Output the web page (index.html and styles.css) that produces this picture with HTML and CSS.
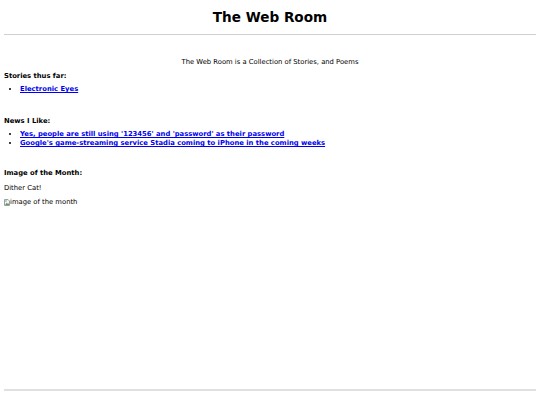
FILE: index.html
```html
<!DOCTYPE html>
<html lang="en">
<head>
<meta charset="utf-8">
<title>The Web Room</title>
<link rel="stylesheet" href="styles.css">
</head>
<body>
<header class="site-header">
  <h1 class="site-title">The Web Room</h1>
  <hr class="rule">
</header>
<main class="content">
  <p class="intro">The Web Room is a Collection of Stories, and Poems</p>

  <section class="block">
    <h2 class="block-title">Stories thus far:</h2>
    <ul class="links">
      <li><a href="#">Electronic Eyes</a></li>
    </ul>
  </section>

  <section class="block block-news">
    <h2 class="block-title">News I Like:</h2>
    <ul class="links">
      <li><a href="#">Yes, people are still using '123456' and 'password' as their password</a></li>
      <li><a href="#">Google's game-streaming service Stadia coming to iPhone in the coming weeks</a></li>
    </ul>
  </section>

  <section class="block block-image">
    <h2 class="block-title">Image of the Month:</h2>
    <p class="caption">Dither Cat!</p>
    <p class="broken-img"><svg class="broken-icon" width="6" height="7" viewBox="0 0 6 7"><path d="M0.5 0.5h3.5l1.5 1.5v4.5h-5z" fill="#f4f4f4" stroke="#a0a0a0" stroke-width="1"/><path d="M1 6l1.7-2.2 1.3 1.2 1-0.8v1.8z" fill="#5aa04a"/><rect x="1" y="1.3" width="1.8" height="1.4" fill="#7fb8e0"/></svg><span>image of the month</span></p>
  </section>
</main>
<footer class="site-footer">
  <hr class="rule rule-bottom">
</footer>
</body>
</html>
```

FILE: styles.css
```css
html, body {
  margin: 0;
  padding: 0;
  background: #ffffff;
}

body {
  font-family: "DejaVu Sans", Verdana, sans-serif;
  font-size: 6.8px;
  line-height: 10px;
  color: #000000;
  padding: 0 4px;
  min-height: 405px;
  box-sizing: border-box;
  display: flex;
  flex-direction: column;
}

.site-title {
  margin: 0;
  padding-top: 8px;
  font-size: 13.6px;
  line-height: 19px;
  font-weight: bold;
  text-align: center;
}

.rule {
  border: 0;
  border-top: 1px solid #cfcfcf;
  height: 0;
  margin: 7px 0 0 0;
}

.content {
  flex: 1;
}

.intro {
  margin: 22px 0 0 0;
  text-align: center;
}

.block {
  margin-top: 4px;
}

.block-news {
  margin-top: 22px;
}

.block-image {
  margin-top: 20px;
}

.block-title {
  margin: 0;
  font-size: 6.8px;
  line-height: 10px;
  font-weight: bold;
}

.links {
  margin: 4px 0 0 0;
  padding-left: 16px;
}

.links li {
  line-height: 9px;
}

.links a {
  color: #0000ee;
  font-weight: bold;
  text-decoration: underline;
}

.caption {
  margin: 5px 0 0 0;
}

.broken-img {
  margin: 4px 0 0 0;
  display: flex;
  align-items: center;
}

.broken-icon {
  display: block;
}

.site-footer {
  padding-bottom: 14px;
}

.rule-bottom {
  border-top: 2px solid #e0e0e0;
}
```
